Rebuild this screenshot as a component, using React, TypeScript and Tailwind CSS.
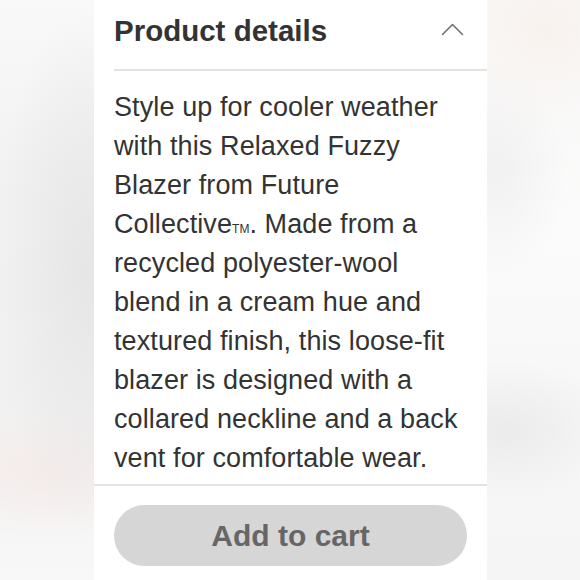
import React from "react";

const lines = [
  "Style up for cooler weather",
  "with this Relaxed Fuzzy",
  "Blazer from Future",
  "__TM__",
  "recycled polyester-wool",
  "blend in a cream hue and",
  "textured finish, this loose-fit",
  "blazer is designed with a",
  "collared neckline and a back",
  "vent for comfortable wear.",
];

export default function App() {
  return (
    <div
      className="flex w-[580px] h-[580px] overflow-hidden bg-[#f6f6f6]"
      style={{ fontFamily: '"Liberation Sans", Arial, Helvetica, sans-serif' }}
    >
      <div className="w-[94px] h-full bg-[radial-gradient(ellipse_90px_260px_at_85px_270px,#e6e6e6,rgba(240,240,240,0)_100%),radial-gradient(ellipse_140px_70px_at_50px_470px,#f5ebea,rgba(245,235,234,0)_100%),linear-gradient(to_bottom,#f9f9f9,#f2f2f2_30%,#f1f1f1_70%,#f8f8f8)]" />
      <div className="w-[393px] h-full bg-white flex flex-col">
        <div className="ml-5 flex items-start justify-between pt-[17px] h-[71px] border-b-2 border-[#e3e3e3]">
          <h1 className="text-[29.5px] leading-[28px] font-bold text-[#333333]">
            Product details
          </h1>
          <svg
            className="mt-[6px] mr-[23px]"
            width="23"
            height="13"
            viewBox="0 0 23 13"
            fill="none"
          >
            <polyline
              points="1.5,11.5 11.5,1.5 21.5,11.5"
              stroke="#707070"
              strokeWidth="1.6"
              strokeLinecap="round"
              strokeLinejoin="round"
            />
          </svg>
        </div>
        <div className="px-5 pt-[17px] pb-[6px] border-b-2 border-[#e3e3e3]">
          <p className="text-[27px] leading-[39px] text-[#333333] tracking-[0.1px]">
            {lines.map((l, i) =>
              l === "__TM__" ? (
                <span key={i} className="block whitespace-nowrap h-[39px]">
                  Collective<span className="text-[12px] leading-none tracking-normal">TM</span>. Made from a
                </span>
              ) : (
                <span key={i} className="block whitespace-nowrap">
                  {l}
                </span>
              )
            )}
          </p>
        </div>
        <div className="px-5 pt-[19px]">
          <button className="w-full h-[61px] rounded-full bg-[#d6d6d6] text-[#666666] text-[30px] font-bold flex items-center justify-center">
            Add to cart
          </button>
        </div>
      </div>
      <div className="flex-1 h-full bg-[radial-gradient(ellipse_110px_70px_at_20px_430px,#ebebeb,rgba(235,235,235,0)_100%),radial-gradient(ellipse_90px_90px_at_60px_30px,#f8f2ee,rgba(248,242,238,0)_100%),radial-gradient(ellipse_70px_110px_at_10px_170px,#f1f1f1,rgba(241,241,241,0)_100%),linear-gradient(to_bottom,#f8f7f6,#fbfbfb_40%,#f7f7f7_70%,#f5f5f5)]" />
    </div>
  );
}
